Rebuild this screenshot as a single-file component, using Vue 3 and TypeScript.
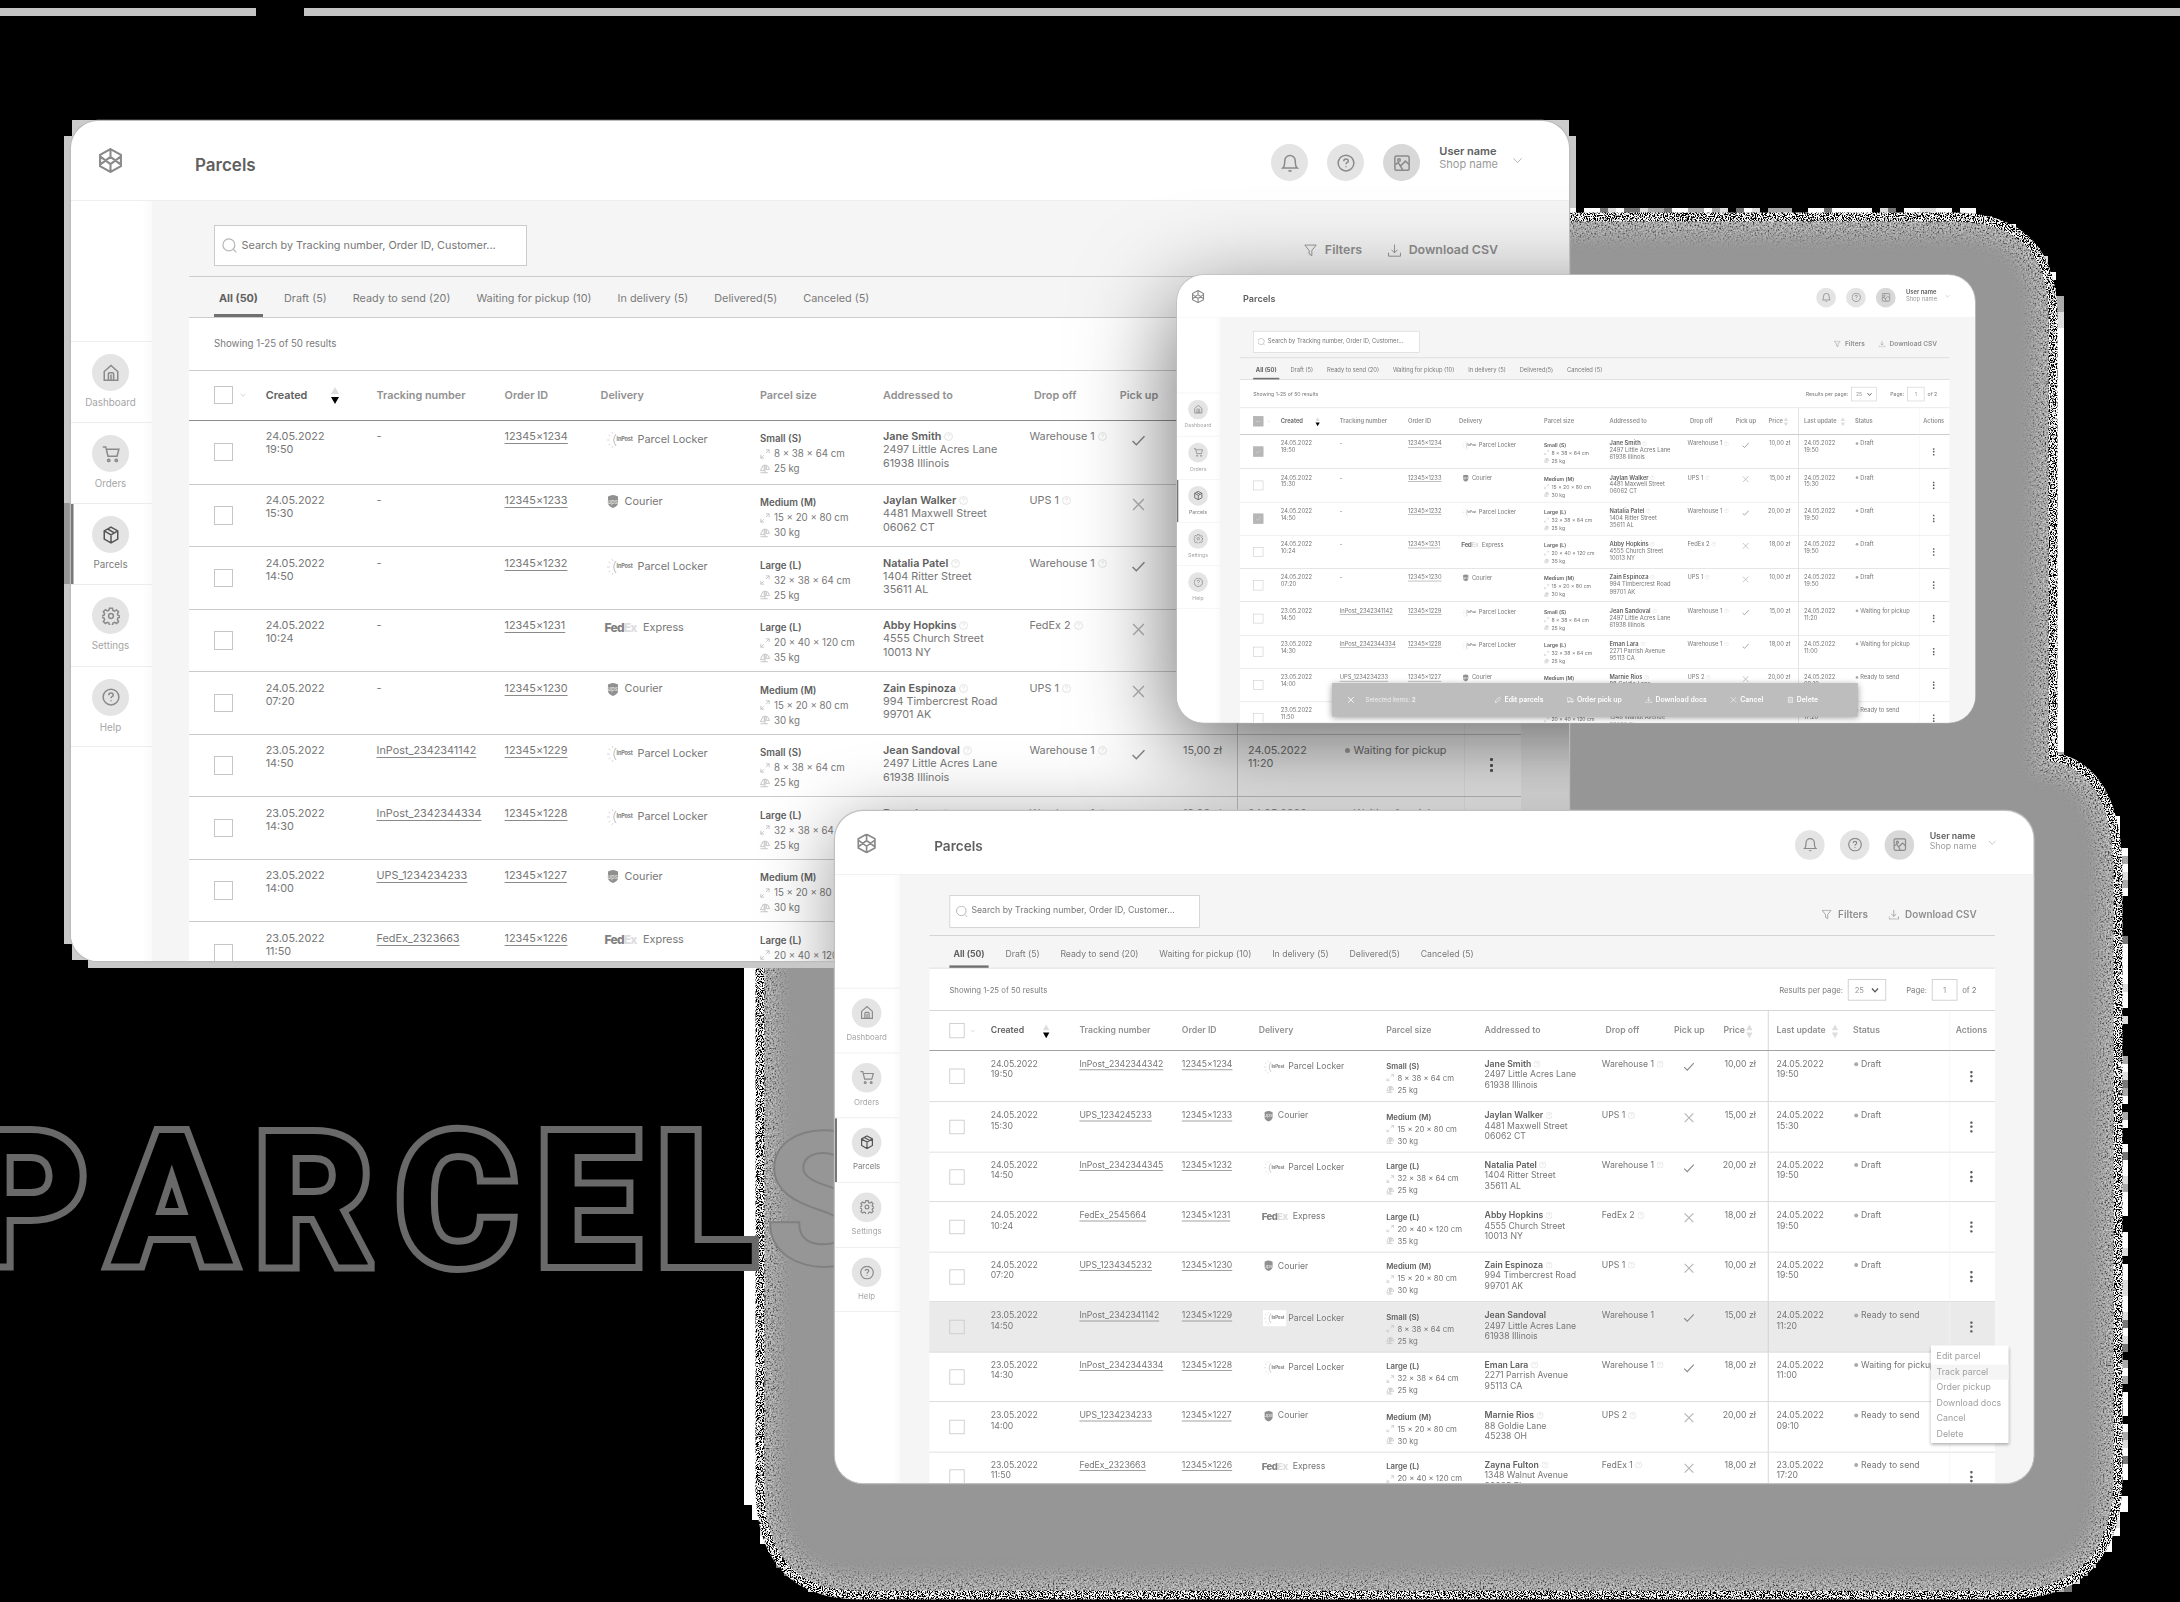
<script setup lang="ts">
interface Parcel {
  date: string; time: string; track: string; order: string; carrier: 'inpost' | 'ups' | 'fedex'
  size: string; dims: string; weight: string; name: string; street: string; city: string
  drop: string; pick: boolean; price: string; upDate: string; upTime: string; status: string
}
interface Win {
  id: string; x: number; y: number; scale: number; radius: number
  checked: number[]; partial: boolean; hover: number; tracked: boolean; sixth: string
}

const sizes: Record<string, [string, string]> = {
  S: ['Small (S)', '8 × 38 × 64 cm'],
  M: ['Medium (M)', '15 × 20 × 80 cm'],
  L: ['Large (L)', '32 × 38 × 64 cm'],
  X: ['Large (L)', '20 × 40 × 120 cm'],
}
const service = { inpost: 'Parcel Locker', ups: 'Courier', fedex: 'Express' }

const raw: [string, string, string, string, Parcel['carrier'], string, string, string, string, string, string, boolean, string, string, string, string][] = [
  ['24.05.2022', '19:50', 'InPost_2342344342', '1234', 'inpost', 'S', '25', 'Jane Smith', '2497 Little Acres Lane', '61938 Illinois', 'Warehouse 1', true, '10,00', '24.05.2022', '19:50', 'Draft'],
  ['24.05.2022', '15:30', 'UPS_1234245233', '1233', 'ups', 'M', '30', 'Jaylan Walker', '4481 Maxwell Street', '06062 CT', 'UPS 1', false, '15,00', '24.05.2022', '15:30', 'Draft'],
  ['24.05.2022', '14:50', 'InPost_2342344345', '1232', 'inpost', 'L', '25', 'Natalia Patel', '1404 Ritter Street', '35611 AL', 'Warehouse 1', true, '20,00', '24.05.2022', '19:50', 'Draft'],
  ['24.05.2022', '10:24', 'FedEx_2545664', '1231', 'fedex', 'X', '35', 'Abby Hopkins', '4555 Church Street', '10013 NY', 'FedEx 2', false, '18,00', '24.05.2022', '19:50', 'Draft'],
  ['24.05.2022', '07:20', 'UPS_1234345232', '1230', 'ups', 'M', '30', 'Zain Espinoza', '994 Timbercrest Road', '99701 AK', 'UPS 1', false, '10,00', '24.05.2022', '19:50', 'Draft'],
  ['23.05.2022', '14:50', 'InPost_2342341142', '1229', 'inpost', 'S', '25', 'Jean Sandoval', '2497 Little Acres Lane', '61938 Illinois', 'Warehouse 1', true, '15,00', '24.05.2022', '11:20', 'Waiting for pickup'],
  ['23.05.2022', '14:30', 'InPost_2342344334', '1228', 'inpost', 'L', '25', 'Eman Lara', '2271 Parrish Avenue', '95113 CA', 'Warehouse 1', true, '18,00', '24.05.2022', '11:00', 'Waiting for pickup'],
  ['23.05.2022', '14:00', 'UPS_1234234233', '1227', 'ups', 'M', '30', 'Marnie Rios', '88 Goldie Lane', '45238 OH', 'UPS 2', false, '20,00', '24.05.2022', '09:10', 'Ready to send'],
  ['23.05.2022', '11:50', 'FedEx_2323663', '1226', 'fedex', 'X', '35', 'Zayna Fulton', '1348 Walnut Avenue', '33025 FL', 'FedEx 1', false, '18,00', '23.05.2022', '17:20', 'Ready to send'],
]
const parcels: Parcel[] = raw.map(r => ({
  date: r[0], time: r[1], track: r[2], order: '12345×' + r[3], carrier: r[4],
  size: sizes[r[5]][0], dims: sizes[r[5]][1], weight: r[6] + ' kg', name: r[7], street: r[8], city: r[9],
  drop: r[10], pick: r[11], price: r[12] + ' zł', upDate: r[13], upTime: r[14], status: r[15],
}))

const windows: Win[] = [
  { id: 'w1', x: 71, y: 120.5, scale: 1, radius: 27, checked: [], partial: false, hover: -1, tracked: false, sixth: 'Waiting for pickup' },
  { id: 'w2', x: 1177, y: 274.5, scale: 0.5327, radius: 50, checked: [0, 2], partial: true, hover: -1, tracked: false, sixth: 'Waiting for pickup' },
  { id: 'w3', x: 835, y: 810.5, scale: 0.8, radius: 35, checked: [], partial: false, hover: 5, tracked: true, sixth: 'Ready to send' },
]
const tabs = ['All (50)', 'Draft (5)', 'Ready to send (20)', 'Waiting for pickup (10)', 'In delivery (5)', 'Delivered(5)', 'Canceled (5)']
const nav: [string, string][] = [['home', 'Dashboard'], ['cart', 'Orders'], ['box', 'Parcels'], ['gear', 'Settings'], ['help', 'Help']]
const menu = ['Edit parcel', 'Track parcel', 'Order pickup', 'Download docs', 'Cancel', 'Delete']

const trackOf = (w: Win, p: Parcel, i: number) => (w.tracked || i > 4 ? p.track : '-')
const statusOf = (w: Win, p: Parcel, i: number) => (i === 5 ? w.sixth : p.status)

// Pixel blocks scattered along the outer rim of the backdrop
const rr = (x: number, y: number, x0: number, y0: number, x1: number, y1: number, r: number) => {
  const qx = Math.abs(x - (x0 + x1) / 2) - (x1 - x0) / 2 + r
  const qy = Math.abs(y - (y0 + y1) / 2) - (y1 - y0) / 2 + r
  return Math.hypot(Math.max(qx, 0), Math.max(qy, 0)) + Math.min(Math.max(qx, qy), 0) - r
}
let seed = 7
const rnd = () => ((seed = (seed * 16807) % 2147483647) / 2147483647)
const shades = ['#fff', '#fff', '#fff', '#ddd', '#aaa', '#777', '#000']
const blocks: { x: number; y: number; c: string }[] = []
for (let y = 200; y < 1592; y += 8) {
  for (let x = 744; x < 2136; x += 8) {
    if (x < 1568 && y < 968) continue
    const cx = x + 4, cy = y + 4
    const d = Math.min(rr(cx, cy, 1400, 217, 2054, 1000, 100), rr(cx, cy, 758, 757, 2119, 1597, 112))
    if (d > -1 && d < 8) blocks.push({ x, y, c: x === 2056 && y > 320 && y < 745 ? '#fff' : shades[Math.floor(rnd() * 7)] })
  }
}
const rim = 'M760 950V1490Q762 1595 860 1595H2007Q2116 1594 2118 1480V870Q2116 768 2053 757V317Q2053 218 1955 217H1560'
</script>

<template>
  <div class="stage">
    <svg class="defs" width="0" height="0">
      <symbol id="logo" viewBox="0 0 24 24"><path d="M12 1l10 5.500v11L12 23 2 17.500v-11zM12 1v7.500M12 15.500V23M2 8l10 7.500L22 8M2 16l10-7.500L22 16" /></symbol>
      <symbol id="home" viewBox="0 0 24 24"><path d="M3 10l9-8 9 8v11.500H3zM8.500 21.500V13q0-1.500 1.500-1.500h4q1.500 0 1.500 1.500v8.500M12 14v7.500" /></symbol>
      <symbol id="cart" viewBox="0 0 24 24"><path d="M1 2.500h4L8 15h12l2.500-9.500H6" /><circle cx="9" cy="20.500" r="1.600" /><circle cx="19" cy="20.500" r="1.600" /></symbol>
      <symbol id="box" viewBox="0 0 24 24"><path d="M12 1.500l9 5v11l-9 5-9-5v-11zM3 6.500l9 5.200 9-5.200M12 11.700v10.800M7.500 4l9 5.200" /></symbol>
      <symbol id="gear" viewBox="0 0 24 24"><circle cx="12" cy="12" r="3.200" /><path d="M10 1.500h4l.6 3 2.200 1 2.700-1.700 2.600 2.700-1.600 2.700.9 2.100 2.600.6v1.800l-2.600.8-.9 2.200 1.600 2.700-2.600 2.600-2.700-1.600-2.200.9-.6 3.200h-4l-.7-3.200-2.100-.9-2.700 1.600-2.700-2.600 1.700-2.700-1-2.200-3-.7v-2l3-.7 1-2.100-1.700-2.700 2.700-2.700 2.700 1.700 2.100-1z" /></symbol>
      <symbol id="help" viewBox="0 0 24 24"><circle cx="12" cy="12" r="10.500" /><path d="M9 9.500q0-3 3-3t3 2.700q0 1.500-1.700 2.300-1.300.7-1.300 2.300M12 16.300v1.200" /></symbol>
      <symbol id="bell" viewBox="0 0 24 24"><path d="M2.500 18.500q2.500-2 2.500-9.500a7 7 0 0 1 14 0q0 7.500 2.500 9.500zM10 22q2 1.300 4 0" /></symbol>
      <symbol id="image" viewBox="0 0 24 24"><rect x="2.500" y="2.500" width="19" height="19" rx="2" /><circle cx="8" cy="8" r="1.800" /><path d="M3 14l4-2.500L13 21M10 16l6.500-6.500L21.500 14" /></symbol>
      <symbol id="search" viewBox="0 0 24 24"><circle cx="11" cy="11" r="9.500" /><path d="M18 18l5 5" /></symbol>
      <symbol id="filter" viewBox="0 0 24 24"><path d="M1.500 2h21L14.500 12v9.500l-5-3V12z" /></symbol>
      <symbol id="down" viewBox="0 0 24 24"><path d="M12 1v15M6.500 11l5.500 5 5.500-5M1 16v6.500h22V16" /></symbol>
      <symbol id="chev" viewBox="0 0 24 24"><path d="M3 7l9 10 9-10" /></symbol>
      <symbol id="check" viewBox="0 0 24 24"><path d="M1 13l7 7L23 4" /></symbol>
      <symbol id="cross" viewBox="0 0 24 24"><path d="M2 2l20 20M22 2L2 22" /></symbol>
      <symbol id="expand" viewBox="0 0 24 24"><path d="M14 2h8v8M22 2l-8 8M2 14v8h8M2 22l7-7" /></symbol>
      <symbol id="scale" viewBox="0 0 24 24"><path d="M12 1v20M7 4h10M7 4L1 16h9V5M17 4l-3 9h9L18 4M1 21h18" /></symbol>
      <symbol id="pen" viewBox="0 0 24 24"><path d="M2 22l2-7L17 2l5 5L9 20z" /></symbol>
      <symbol id="truck" viewBox="0 0 24 24"><path d="M1 18V5h13v13zM14 9h5l4 5v4h-9" /><circle cx="6" cy="19" r="2" /><circle cx="18" cy="19" r="2" /></symbol>
      <symbol id="trash" viewBox="0 0 24 24"><path d="M2 5h20M5 5v17h14V5M9 5V2h6v3M10 10v8M14 10v8" /></symbol>
      <symbol id="inpost" viewBox="0 0 28 20"><path d="M10 4q-4.500 6 0 12" stroke-width="1" /><path d="M6 2l1 2M2.500 5l2 1M1 10h3M2.500 15l2-1M6 18l1-2" stroke-width=".9" opacity=".6" /></symbol>
      <symbol id="shield" viewBox="0 0 24 28"><path d="M2 4q10-6 20 0v13q0 6-10 10Q2 23 2 17z" /></symbol>
    </svg>

    <svg class="backdrop" width="2180" height="1602" viewBox="0 0 2180 1602">
      <defs>
        <filter id="hard" x="0" y="0" width="2180" height="1602" filterUnits="userSpaceOnUse">
          <feTurbulence type="fractalNoise" baseFrequency=".85" numOctaves="2" seed="3" />
          <feColorMatrix values="9 0 0 0 -4  9 0 0 0 -4  9 0 0 0 -4  0 0 0 0 1" />
          <feComposite in2="SourceGraphic" operator="in" />
        </filter>
        <filter id="soft" x="0" y="0" width="2180" height="1602" filterUnits="userSpaceOnUse">
          <feGaussianBlur in="SourceGraphic" stdDeviation="9" result="b" />
          <feTurbulence type="fractalNoise" baseFrequency=".6" numOctaves="3" seed="9" />
          <feColorMatrix values="2 0 0 0 -.55  2 0 0 0 -.55  2 0 0 0 -.55  0 0 0 0 1" />
          <feComposite in2="b" operator="in" />
        </filter>
        <clipPath id="body"><path :d="rim + 'V950Z'" /></clipPath>
      </defs>
      <path d="M0 8H256V16H0zM304 8H2180V16H304z" fill="#c4c4c4" />
      <rect v-for="(b, i) in blocks" :key="i" :x="b.x" :y="b.y" width="8" height="8" :fill="b.c" />
      <rect x="744" y="960" width="14" height="545" fill="#fff" />
      <path :d="rim + 'V950Z'" fill="#969696" />
      <g clip-path="url(#body)"><path :d="rim" fill="none" stroke="#000" stroke-width="36" opacity=".65" filter="url(#soft)" /></g>
      <path :d="rim" fill="none" stroke="#000" stroke-width="9" filter="url(#hard)" />
      <g class="word">
        <text x="-32 110 254 396 536 656" y="1264" fill="#000" stroke="#696969" stroke-width="14">PARCEL</text>
        <text x="765" y="1264" fill="#969696" stroke="#808080" stroke-width="4">S</text>
      </g>
      <path d="M72 120H110V158H72zM1531 120H1569V158H1531zM72 922H110V960H72z" fill="#ccc" />
      <path d="M64 136H72V944H64zM88 960H835V968H88zM1568 136H1576V208H1568z" fill="#c8c8c8" />
      <path d="M64 503H72V584H64z" fill="#969696" />
    </svg>

    <section
      v-for="w in windows" :key="w.id" class="win" :class="w.id"
      :style="{ left: w.x + 'px', top: w.y + 'px', transform: `scale(${w.scale})`, borderRadius: w.radius + 'px' }"
    >
      <header class="top">
        <svg class="ic logo"><use href="#logo" /></svg>
        <h1>Parcels</h1>
        <div class="user">
          <span class="disc"><svg class="ic"><use href="#bell" /></svg></span>
          <span class="disc"><svg class="ic"><use href="#help" /></svg></span>
          <span class="disc dark"><svg class="ic"><use href="#image" /></svg></span>
          <p><b>User name</b><br />Shop name</p>
          <svg class="ic uchev"><use href="#chev" /></svg>
        </div>
      </header>
      <div class="main">
        <nav>
          <a v-for="n in nav" :key="n[0]" :class="{ on: n[0] === 'box' }">
            <span class="disc"><svg class="ic"><use :href="'#' + n[0]" /></svg></span>{{ n[1] }}
          </a>
        </nav>
        <div class="panel">
          <div class="tools">
            <div class="search"><svg class="ic"><use href="#search" /></svg>Search by Tracking number, Order ID, Customer...</div>
            <div class="acts">
              <span><svg class="ic"><use href="#filter" /></svg>Filters</span>
              <span><svg class="ic"><use href="#down" /></svg>Download CSV</span>
            </div>
          </div>
          <div class="tabs"><span v-for="(t, i) in tabs" :key="t" :class="{ on: !i }">{{ t }}</span></div>
          <div class="info">
            <span>Showing 1-25 of 50 results</span>
            <div class="pager">
              <span>Results per page:</span>
              <span class="sel">25<svg class="ic"><use href="#chev" /></svg></span>
              <span class="pg">Page:</span><span class="num">1</span><span>of 2</span>
            </div>
          </div>
          <div class="row head">
            <div class="ck"><i class="cb" :class="{ full: w.partial }"><em v-if="w.partial"></em></i><svg class="ic hchev"><use href="#chev" /></svg></div>
            <div class="dark-t">Created<span class="sort live"><i></i><i></i></span></div>
            <div>Tracking number</div>
            <div>Order ID</div>
            <div>Delivery</div>
            <div>Parcel size</div>
            <div>Addressed to</div>
            <div class="dh">Drop off</div>
            <div class="ph">Pick up</div>
            <div class="rh">Price<span class="sort"><i></i><i></i></span></div>
            <div class="lu">Last update<span class="sort"><i></i><i></i></span></div>
            <div>Status</div>
            <div class="ah">Actions</div>
          </div>
          <div v-for="(p, i) in parcels" :key="p.order" class="row" :class="{ first: !i, hover: w.hover === i }">
            <div class="ck"><i class="cb" :class="{ full: w.checked.includes(i) }"><svg v-if="w.checked.includes(i)" class="ic"><use href="#check" /></svg></i></div>
            <div>{{ p.date }}<br />{{ p.time }}</div>
            <div><u v-if="trackOf(w, p, i) !== '-'">{{ p.track }}</u><template v-else>-</template></div>
            <div><u>{{ p.order }}</u></div>
            <div class="dl" :class="p.carrier">
              <span v-if="p.carrier === 'inpost'" class="inp"><svg class="ic"><use href="#inpost" /></svg><b>InPost</b></span>
              <span v-else-if="p.carrier === 'ups'" class="ups"><svg><use href="#shield" /></svg><b>ups</b></span>
              <span v-else class="fdx">Fed<s>Ex</s></span>
              {{ service[p.carrier] }}
            </div>
            <div class="sz">
              <b>{{ p.size }}</b>
              <span><svg class="ic"><use href="#expand" /></svg>{{ p.dims }}</span>
              <span><svg class="ic"><use href="#scale" /></svg>{{ p.weight }}</span>
            </div>
            <div><b>{{ p.name }}</b><svg class="ic q"><use href="#help" /></svg><br />{{ p.street }}<br />{{ p.city }}</div>
            <div>{{ p.drop }}<svg class="ic q"><use href="#help" /></svg></div>
            <div class="pk"><svg class="ic" :class="{ no: !p.pick }"><use :href="p.pick ? '#check' : '#cross'" /></svg></div>
            <div class="pr">{{ p.price }}</div>
            <div class="lu">{{ p.upDate }}<br />{{ p.upTime }}</div>
            <div class="st"><i></i>{{ statusOf(w, p, i) }}</div>
            <div class="ac"><i></i><i></i><i></i></div>
          </div>
        </div>
      </div>

      <div v-if="w.id === 'w1'" class="cast cast-a"></div>
      <div v-if="w.id === 'w1'" class="cast cast-b"></div>
      <div v-if="w.id === 'w2'" class="bulk">
        <svg class="ic x"><use href="#cross" /></svg>
        <span class="cnt">Selected items: <b>2</b></span>
        <span><svg class="ic"><use href="#pen" /></svg>Edit parcels</span>
        <span><svg class="ic"><use href="#truck" /></svg>Order pick up</span>
        <span><svg class="ic"><use href="#down" /></svg>Download docs</span>
        <span><svg class="ic"><use href="#cross" /></svg>Cancel</span>
        <span><svg class="ic"><use href="#trash" /></svg>Delete</span>
      </div>
      <div v-if="w.id === 'w3'" class="menu"><span v-for="(m, i) in menu" :key="m" :class="{ on: i === 1 }">{{ m }}</span></div>
    </section>
  </div>
</template>

<style>
body { background: #000; overflow: hidden; }
</style>

<style scoped>
.stage { position: relative; width: 2180px; height: 1602px; overflow: hidden; background: #000; font-family: Inter, "Liberation Sans", sans-serif; }
.defs { position: absolute; }
.backdrop { display: block; }
.word text { font: 700 184px Roboto, Inter, sans-serif; paint-order: stroke; stroke-linejoin: miter; }
.ic { fill: none; stroke: currentColor; stroke-width: 2; flex: none; }
.win { position: absolute; width: 1498px; height: 840px; transform-origin: 0 0; overflow: hidden; background: #fff; color: #767676; font-size: 10.850px; line-height: 13.3px; box-shadow: 0 0 0 1.200px #bbb; }
.w3, .w2 { box-shadow: 0 0 0 1.500px #c0c0c0; }
.top { height: 80px; display: flex; align-items: center; border-bottom: 1px solid #eee; box-sizing: border-box; }
.logo { width: 25px; height: 25px; margin: 1px 0 0 27px; color: #8a8a8a; }
h1 { margin: 9px 0 0 72px; font-size: 17px; font-weight: 600; line-height: 20px; color: #606060; }
.user { margin-left: auto; display: flex; align-items: center; padding: 5px 46px 0 0; }
.disc { width: 37px; height: 37px; border-radius: 50%; background: #e4e4e4; display: flex; align-items: center; justify-content: center; color: #8a8a8a; }
.user .disc { margin-right: 19px; }
.disc.dark { background: #d8d8d8; }
.disc .ic { width: 18px; height: 18px; }
.user p { margin: -9px 14px 0 0; font-size: 11px; line-height: 13px; color: #9a9a9a; }
.user b { color: #606060; font-weight: 600; }
.uchev { width: 11px; height: 11px; margin-top: -5px; color: #b4b4b4; }
.main { display: flex; background: #f5f5f5; height: 760px; }
nav { width: 81px; box-sizing: border-box; flex: none; background: linear-gradient(90deg, #fff 88%, #fafafa); padding-top: 140.700px; }
nav a { display: flex; flex-direction: column; align-items: center; height: 81.100px; box-sizing: border-box; border-top: 1.500px solid #ececec; padding: 12px 2px 0 0; font-size: 9.800px; color: #a6a6a6; gap: 5px; }
nav a:last-child { border-bottom: 1.500px solid #ececec; }
nav a.on { color: #7c7c7c; box-shadow: inset 2.500px 0 #777; }
nav a.on .disc { color: #555; }
.panel { width: 1332px; margin-left: 37px; flex: none; }
.tools { height: 76px; box-sizing: border-box; padding: 24.500px 23px 0 25px; display: flex; justify-content: space-between; align-items: flex-start; border-bottom: 1px solid #ccc; }
.search { width: 313px; height: 41px; box-sizing: border-box; border: 1.500px solid #ccc; background: #fff; display: flex; align-items: center; padding-left: 7px; gap: 4.500px; color: #777; }
.search .ic { width: 15px; height: 15px; color: #b8b8b8; }
.acts { display: flex; gap: 26px; padding-top: 17px; font-size: 12.400px; font-weight: 600; color: #8f8f8f; line-height: 16px; }
.acts span { display: flex; align-items: center; gap: 7.500px; }
.acts .ic { width: 13px; height: 13px; stroke-width: 1.700; }
.tabs { height: 41px; display: flex; gap: 16px; padding-left: 25px; border-bottom: 1px solid #ccc; box-sizing: border-box; }
.tabs span { padding: 15.500px 5px 0; height: 40px; box-sizing: border-box; color: #7a7a7a; }
.tabs .on { font-weight: 700; color: #606060; border-bottom: 3px solid #707070; }
.info { height: 53px; box-sizing: border-box; background: #fff; border-bottom: 1px solid #ccc; display: flex; justify-content: space-between; align-items: center; padding: 1px 23px 0 25px; font-size: 9.700px; color: #7a7a7a; }
.pager { display: flex; align-items: center; gap: 6px; }
.sel, .num { height: 27px; box-sizing: border-box; border: 1.200px solid #c8c8c8; display: flex; align-items: center; justify-content: center; color: #999; }
.sel { width: 48px; gap: 9px; }
.sel .ic { width: 10px; height: 10px; color: #555; stroke-width: 4; }
.num { width: 32px; }
.pg { margin-left: 19px; }
.row { display: grid; grid-template-columns: 76.700px 110.800px 128.100px 96px 159.400px 123px 146.500px 79.500px 60px 68px 106.600px 120.400px 57px; height: 62.500px; box-sizing: border-box; background: #fff; border-bottom: 1.200px solid #cbcbcb; }
.row > div { padding-top: 9.500px; white-space: nowrap; }
.row.first { height: 64px; }
.row.hover { background: #eaeaea; }
.row b { font-weight: 600; color: #606060; }
.row u { text-underline-offset: 2.500px; text-decoration-color: #8a8a8a; }
.row.head { height: 50px; border-bottom: 1.500px solid #8c8c8c; font-weight: 600; color: #919191; }
.row.head > div { padding-top: 18px; position: relative; }
.row .dark-t { color: #606060; }
.row > .ck, .row.head > .ck { display: flex; align-items: center; padding: 0 0 0 25px; gap: 7px; }
.cb { width: 18.500px; height: 18.500px; box-sizing: border-box; border: 1.200px solid #c6c6c6; display: flex; align-items: center; justify-content: center; background: #fff; }
.hover .cb { background: none; }
.cb.full { background: #b6b6b6; border-color: #b6b6b6; color: #eee; }
.cb .ic { width: 11px; height: 9px; }
.cb em { width: 8px; height: 1.500px; background: #ddd; }
.hchev { width: 6px; height: 6px; color: #aaa; }
.sort { display: inline-flex; flex-direction: column; gap: 3px; vertical-align: middle; margin: -2px 0 -2px 4px; }
.sort i { border: 4px solid transparent; border-top-width: 0; border-bottom: 7px solid #ddd; }
.sort i + i { border-top: 7px solid #ddd; border-bottom-width: 0; }
.sort.live { margin-left: 24px; }
.sort.live i + i { border-top-color: #000; }
.row.head .dh { padding-left: 4.500px; }
.row.head .ph { text-align: center; }
.row.head .rh { padding-left: 12.500px; }
.rh .sort { margin-left: 2px; }
.lu { padding-left: 10px; border-left: 1.500px solid #ccc; }
.lu .sort { margin-left: 8px; }
.ah { padding-left: 7px; border-left: 1px solid #f4f4f4; font-size: 10.700px; }
.row > .dl { display: flex; align-items: center; height: 15px; padding-left: 6px; }
.row > .inpost { padding-top: 12px; }
.inp { position: relative; width: 29px; height: 20px; box-sizing: border-box; margin: 0 3px 0 -1px; padding-right: 2px; display: flex; align-items: center; justify-content: flex-end; color: #999; }
.hover .inp { background: #fff; }
.inp .ic { position: absolute; left: 0; width: 28px; height: 20px; stroke: #bbb; }
.row .inp b { font-size: 5.600px; font-weight: 700; color: #808080; letter-spacing: -.2px; position: relative; }
.row > .ups { padding-top: 9.500px; }
span.ups { position: relative; width: 12px; height: 15px; margin-right: 6px; display: flex; align-items: center; justify-content: center; }
span.ups svg { position: absolute; inset: 0; width: 12px; height: 15px; fill: #909090; }
.row .ups b { position: relative; font-size: 6px; color: #ddd; }
.row > .fedex { padding: 10.500px 0 0 4px; }
.fdx { flex: none; font-weight: 800; font-size: 12px; letter-spacing: -.8px; color: #828282; width: 38.500px; }
.fdx s { color: #dedede; text-decoration: none; }
.row > .sz { display: flex; flex-direction: column; padding-top: 10.500px; font-size: 9.700px; line-height: 15px; }
.sz span { display: flex; align-items: center; gap: 4px; }
.sz .ic { width: 10px; height: 10px; color: #bdbdbd; }
.q { width: 9px; height: 9px; margin-left: 3px; color: #dadada; vertical-align: -1px; }
.hover .q { visibility: hidden; }
.row > .pk { display: flex; justify-content: center; padding-top: 13px; }
.pk .ic { width: 13px; height: 13px; color: #888; stroke-width: 2.600; }
.pk .no { color: #b4b4b4; }
.pr { text-align: right; padding-right: 15px; }
.st i { display: inline-block; width: 5px; height: 5px; border-radius: 50%; background: #aaa; margin: 0 4px 1px 1px; }
.row > .ac { border-left: 1px solid #f4f4f4; display: flex; flex-direction: column; align-items: center; justify-content: center; padding: 0 3px 0 0; gap: 2.500px; }
.ac i { width: 3px; height: 3px; border-radius: 1px; background: #5c5c5c; }
.cast { position: absolute; border-radius: 27px; }
.cast-a { left: 1106px; top: 154px; width: 798px; height: 447px; box-shadow: 0 28px 95px 4px rgba(0, 0, 0, .56); }
.cast-b { left: 764px; top: 690px; width: 1198px; height: 672px; box-shadow: 0 12px 75px 0 rgba(0, 0, 0, .4); }
.bulk { position: absolute; left: 291px; top: 766px; width: 987px; height: 63px; box-sizing: border-box; background: #bdbdbd; box-shadow: 0 3px 12px rgba(0, 0, 0, .4); color: #fff; font-size: 12.900px; font-weight: 600; display: flex; align-items: center; gap: 44px; padding-left: 29px; }
.bulk span { display: flex; align-items: center; gap: 6px; white-space: pre; }
.bulk .ic { width: 13px; height: 13px; }
.bulk .x { stroke-width: 3; }
.bulk .cnt { font-weight: 400; font-size: 11.500px; gap: 0; margin: 0 104px 0 -23px; color: #eee; }
.menu { position: absolute; left: 1370px; top: 668px; width: 97px; height: 122px; box-sizing: border-box; padding-top: 4px; background: #fff; box-shadow: 0 3px 4px rgba(0, 0, 0, .3); color: #a0a0a0; font-size: 11px; }
.menu span { display: block; height: 19.500px; line-height: 19.500px; padding-left: 7px; }
.menu .on { background: #f5f5f5; }
</style>
